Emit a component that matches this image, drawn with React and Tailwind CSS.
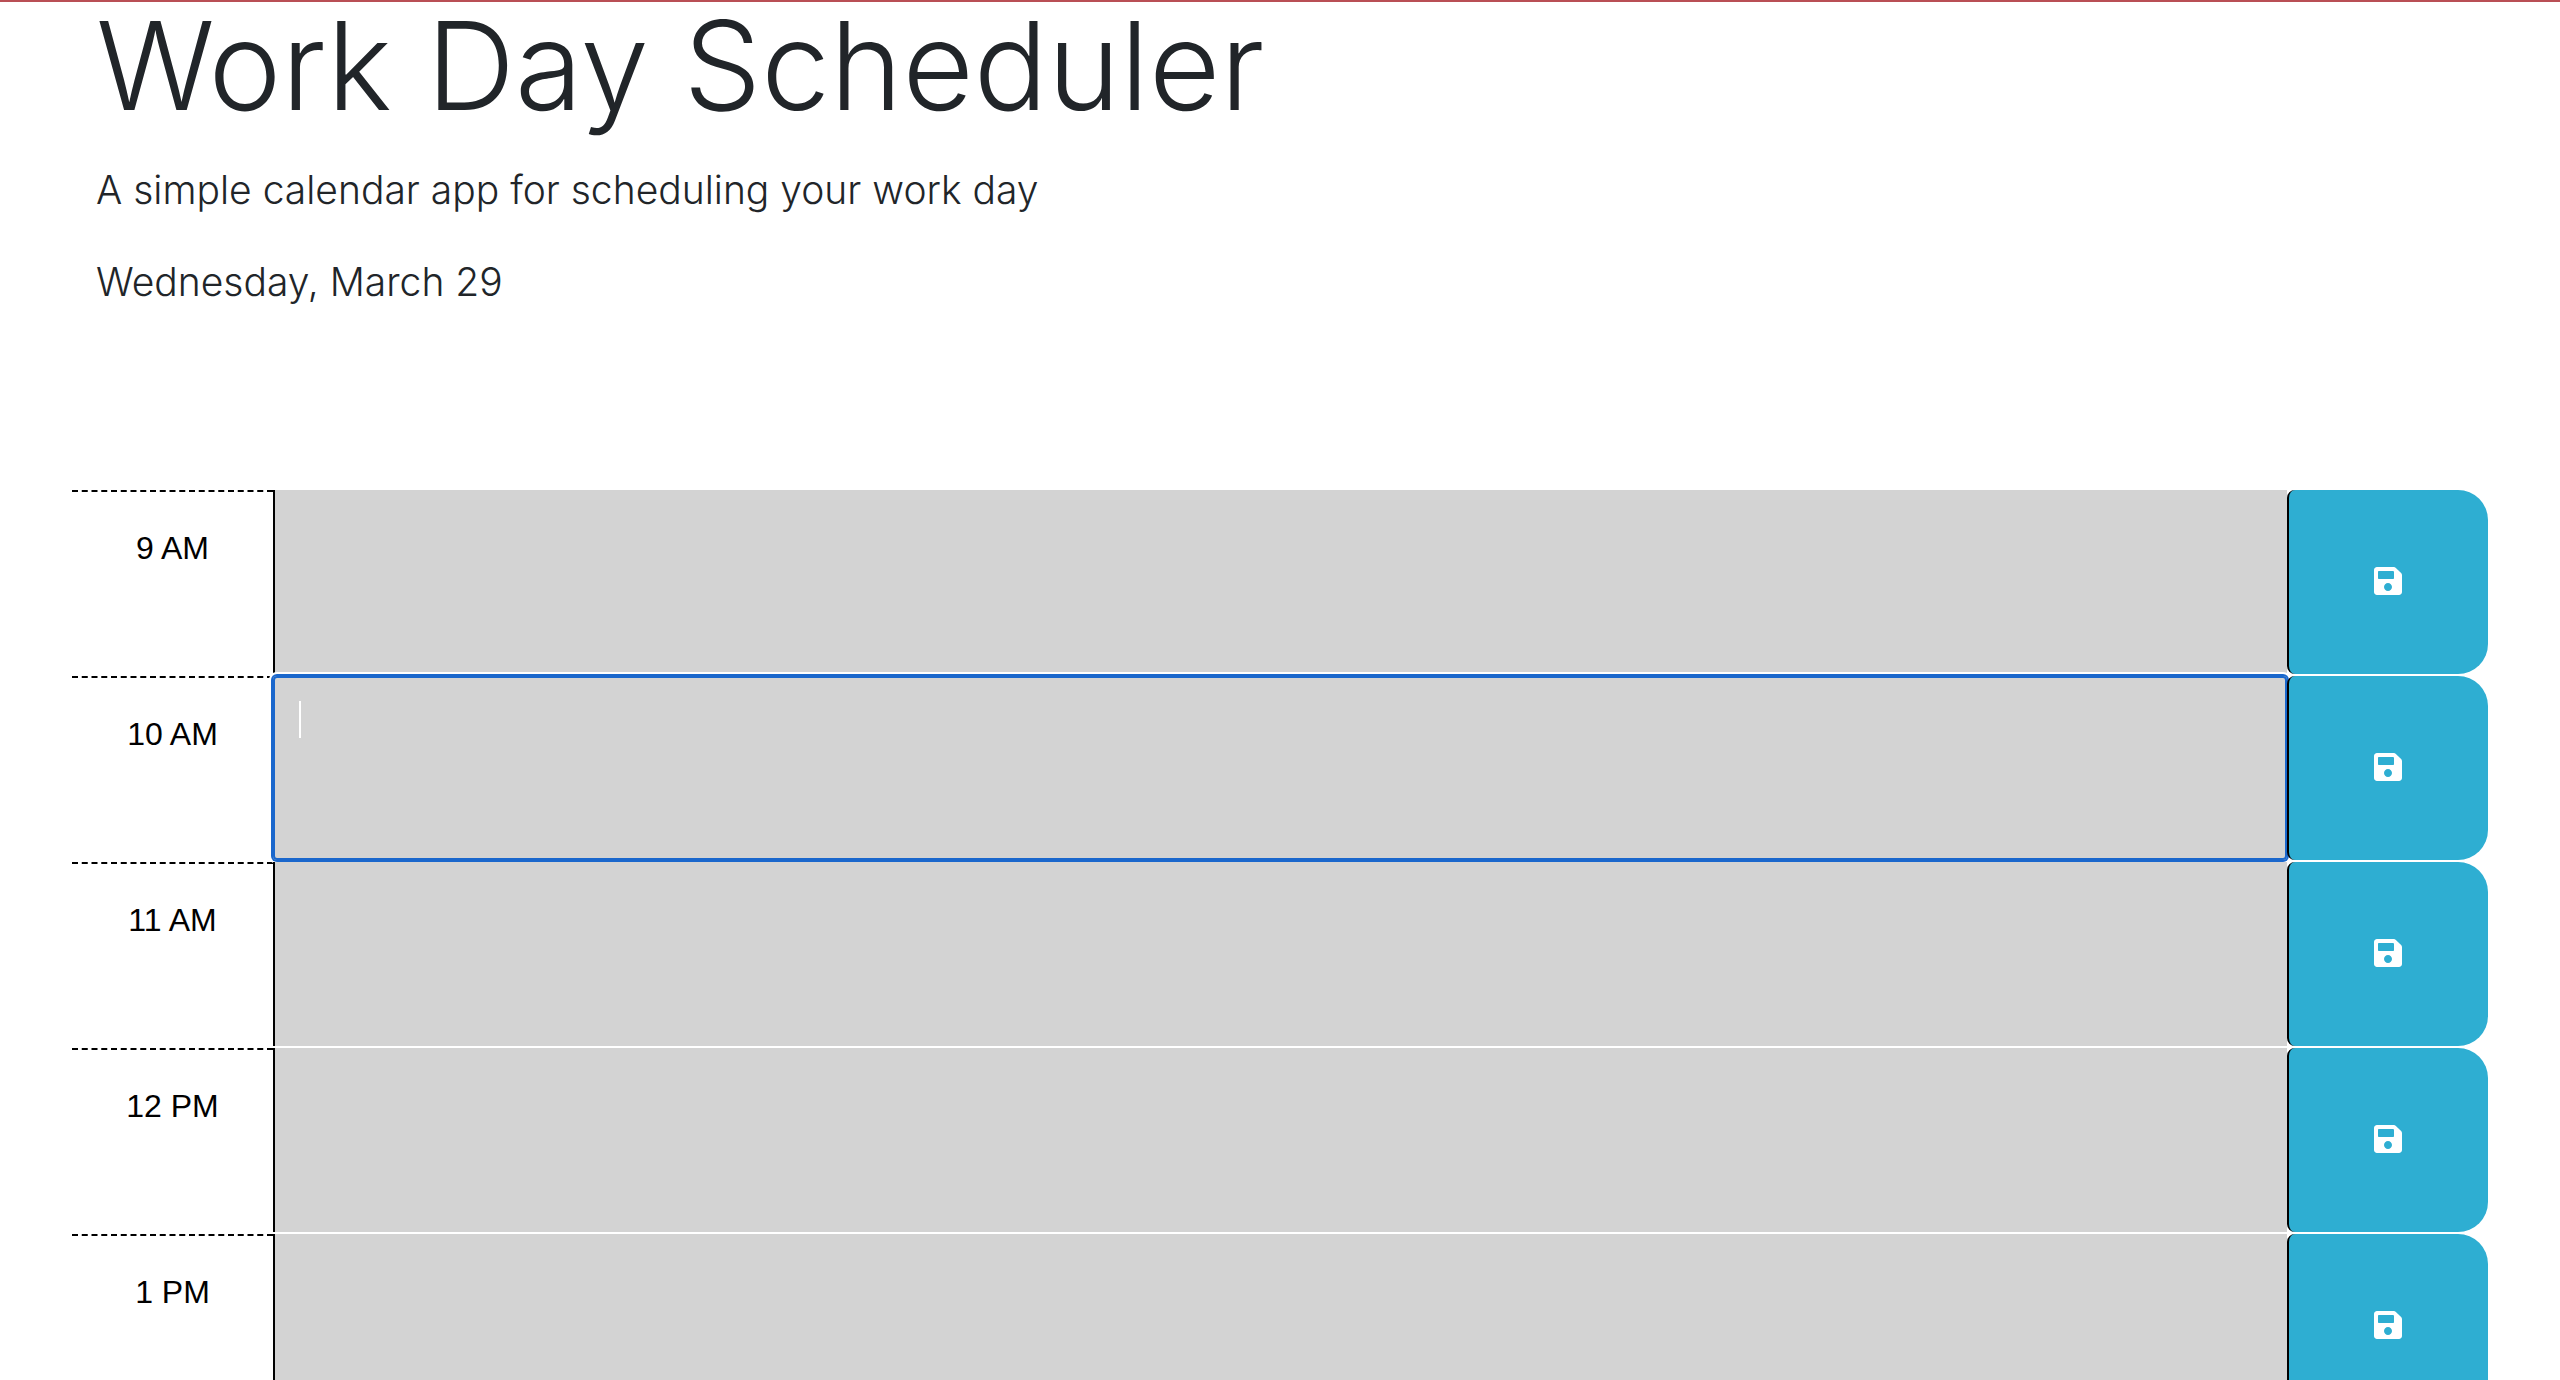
import { FaSave } from "react-icons/fa";

const HOURS = ["9 AM", "10 AM", "11 AM", "12 PM", "1 PM"];
const ACTIVE_HOUR = "10 AM";

function TimeBlock({ hour, active }) {
  const id = "note-" + hour.replace(" ", "-").toLowerCase();
  return (
    <div className="grid h-[186px] grid-cols-[201px_1fr_201px] border-t-2 border-white">
      <label
        htmlFor={id}
        className="border-t-2 border-dashed border-black py-8 text-center text-[32px] leading-[48px] text-black"
      >
        {hour}
      </label>
      <div className="relative flex">
        <textarea
          id={id}
          className={
            active
              ? "flex-1 resize-none rounded-[4px] bg-[#d3d3d3] p-6 text-[32px] leading-[48px] text-white caret-white shadow-[inset_0_0_0_2px_#1a67cc,0_0_0_2px_#1a67cc,0_0_0_4px_#fff] outline-none"
              : "flex-1 resize-none border-l-2 border-black bg-[#d3d3d3] p-6 text-[32px] leading-[48px] text-white outline-none"
          }
        />
        {active && <span className="absolute left-[26px] top-[25px] h-[37px] w-[2px] bg-white" />}
      </div>
      <button
        type="button"
        aria-label={"Save " + hour}
        className="relative flex items-center justify-center rounded-l-[8px] rounded-r-[30px] border-l-2 border-black bg-[#2eaed2] pr-[2px] pb-[2px] text-[32px] text-white"
      >
        <FaSave />
      </button>
    </div>
  );
}

export default function App() {
  return (
    <div className="h-screen overflow-hidden border-t-2 border-[#b94f55] bg-white font-['Liberation_Sans',Arial,sans-serif] text-[#212529]">
      <header className="px-24 font-['Inter','Liberation_Sans',sans-serif] font-light">
        <h1 className="text-[123px] leading-[128px]">Work Day Scheduler</h1>
        <p className="mt-[30px] text-[39px] leading-[60px]">A simple calendar app for scheduling your work day</p>
        <p className="mt-8 text-[39px] leading-[60px]">Wednesday, March 29</p>
      </header>
      <main className="mt-44 px-[72px]">
        {HOURS.map((hour) => (
          <TimeBlock key={hour} hour={hour} active={hour === ACTIVE_HOUR} />
        ))}
      </main>
    </div>
  );
}
